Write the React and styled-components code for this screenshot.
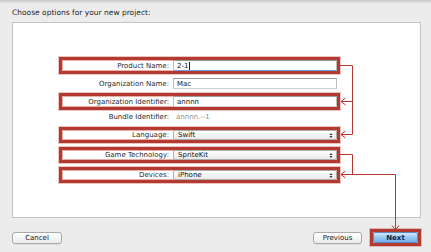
import React from 'react';
import styled, { createGlobalStyle } from 'styled-components';

const Global = createGlobalStyle`
  html, body { margin: 0; padding: 0; background: #ececec; }
  body { font-family: "DejaVu Sans", "Liberation Sans", sans-serif; }
`;

const RED = '#b23a30';

const Window = styled.div`
  position: relative;
  width: 431px;
  height: 252px;
  background: #ececec;
  display: flex;
  flex-direction: column;
  overflow: hidden;
`;

const TopEdge = styled.div`
  height: 3px;
  background: linear-gradient(#c6c6c6, #e3e3e3);
`;

const Title = styled.div`
  height: 19px;
  display: flex;
  align-items: center;
  padding-left: 12px;
  font-size: 7.5px;
  color: #1e1e1e;
`;

const Panel = styled.div`
  box-sizing: border-box;
  margin-left: 12px;
  width: 409px;
  height: 196px;
  background: #fff;
  border: 1px solid #c4c4c4;
  padding: 34px 0 0 46px;
  display: flex;
  flex-direction: column;
`;

const Row = styled.div`
  box-sizing: border-box;
  width: 281px;
  height: ${p => p.$h}px;
  margin-top: ${p => p.$mt || 0}px;
  border: 3px solid ${p => (p.$hl ? RED : 'transparent')};
  box-shadow: ${p => (p.$hl ? 'inset 0 0 0 1px #eab0a8, 0 0 0 1px rgba(200, 90, 80, 0.35)' : 'none')};
  display: grid;
  grid-template-columns: 108px 164px;
  column-gap: 3px;
  align-items: center;
`;

const Label = styled.div`
  text-align: right;
  font-size: 7px;
  color: #2a2a2a;
  white-space: nowrap;
  padding-right: 1px;
`;

const TextField = styled.div`
  box-sizing: border-box;
  height: 11px;
  border: 1px solid #bdbdbd;
  border-top-color: #9c9c9c;
  border-bottom-color: ${p => (p.$focus ? '#6f9fe2' : '#cfcfcf')};
  background: #fff;
  font-size: 7px;
  color: #111;
  padding-left: 3px;
  display: flex;
  align-items: center;
`;

const Caret = styled.span`
  display: inline-block;
  width: 1px;
  height: 8px;
  margin-left: 1px;
  background: #222;
`;

const Value = styled.div`
  font-size: 7px;
  color: #8e8e8e;
  padding-left: 3px;
  white-space: nowrap;
`;

const Popup = styled.div`
  box-sizing: border-box;
  height: 10px;
  border: 1px solid #aeaeae;
  border-radius: 2px;
  background: linear-gradient(#ffffff, #e9e9e9);
  font-size: 7px;
  color: #111;
  padding: 0 3px 0 4px;
  display: flex;
  align-items: center;
  justify-content: space-between;
`;

const Footer = styled.div`
  flex: 1;
  display: flex;
  align-items: center;
  gap: 8px;
  padding: 5px 10px 0 12px;
`;

const Button = styled.div`
  box-sizing: border-box;
  width: ${p => p.$w}px;
  height: 12px;
  margin-left: ${p => (p.$push ? 'auto' : '0')};
  border: 1px solid #a9a9a9;
  border-radius: 3px;
  background: linear-gradient(#ffffff, #ebebeb);
  box-shadow: 0 1px 0 rgba(0, 0, 0, 0.06);
  font-size: 7px;
  color: #151515;
  display: flex;
  align-items: center;
  justify-content: center;
`;

const NextWrap = styled.div`
  box-sizing: border-box;
  width: 51px;
  height: 17px;
  border: 3px solid ${RED};
  box-shadow: inset 0 0 0 1px #eab0a8, 0 0 0 1px rgba(200, 90, 80, 0.35);
  display: flex;
`;

const NextButton = styled.div`
  flex: 1;
  box-sizing: border-box;
  border: 1px solid #5d8bc8;
  border-radius: 2px;
  background: linear-gradient(#d3e8fd, #97c8f4 50%, #74b2ee);
  font-size: 7px;
  font-weight: bold;
  color: #10243f;
  display: flex;
  align-items: center;
  justify-content: center;
`;

const Overlay = styled.svg`
  position: absolute;
  left: 0;
  top: 0;
  pointer-events: none;
`;

const Stepper = () => (
  <svg width="4" height="7" viewBox="0 0 4 7">
    <path d="M0.5 3 L2 1 L3.5 3 Z" fill="#333" />
    <path d="M0.5 4 L2 6 L3.5 4 Z" fill="#333" />
  </svg>
);

const rows = [
  { label: 'Product Name:', kind: 'text', value: '2-1', hl: true, focus: true, h: 17 },
  { label: 'Organization Name:', kind: 'text', value: 'Mac', h: 17, mt: 1 },
  { label: 'Organization Identifier:', kind: 'text', value: 'annnn', hl: true, h: 17, mt: 1 },
  { label: 'Bundle Identifier:', kind: 'value', value: 'annnn.--1', h: 12 },
  { label: 'Language:', kind: 'popup', value: 'Swift', hl: true, h: 16, mt: 5 },
  { label: 'Game Technology:', kind: 'popup', value: 'SpriteKit', hl: true, h: 16, mt: 4 },
  { label: 'Devices:', kind: 'popup', value: 'iPhone', hl: true, h: 16, mt: 4 },
];

const Arrow = ({ d, head }) => (
  <g>
    <path d={d} fill="none" stroke={RED} strokeWidth="1" />
    <path d={head} fill="none" stroke={RED} strokeWidth="1" />
  </g>
);

export default function App() {
  return (
    <>
      <Global />
      <Window>
        <TopEdge />
        <Title>Choose options for your new project:</Title>
        <Panel>
          {rows.map(r => (
            <Row key={r.label} $hl={r.hl} $h={r.h} $mt={r.mt}>
              <Label>{r.label}</Label>
              {r.kind === 'text' && (
                <TextField $focus={r.focus}>
                  {r.value}
                  {r.focus && <Caret />}
                </TextField>
              )}
              {r.kind === 'value' && <Value>{r.value}</Value>}
              {r.kind === 'popup' && (
                <Popup>
                  <span>{r.value}</span>
                  <Stepper />
                </Popup>
              )}
            </Row>
          ))}
        </Panel>
        <Footer>
          <Button $w={50}>Cancel</Button>
          <Button $w={49} $push>Previous</Button>
          <NextWrap>
            <NextButton>Next</NextButton>
          </NextWrap>
        </Footer>
        <Overlay width="431" height="252" viewBox="0 0 431 252">
          <path d="M340 65.5 H352.5 V134.5" fill="none" stroke={RED} strokeWidth="1" />
          <Arrow d="M352.5 101.5 H341" head="M345.5 98 L341 101.5 L345.5 105" />
          <Arrow d="M352.5 134.5 H341" head="M345.5 131 L341 134.5 L345.5 138" />
          <path d="M340 154.5 H352.5 V174.5" fill="none" stroke={RED} strokeWidth="1" />
          <Arrow d="M395.5 174.5 H341" head="M345.5 171 L341 174.5 L345.5 178" />
          <Arrow d="M395.5 174.5 V230" head="M392 225.5 L395.5 230 L399 225.5" />
        </Overlay>
      </Window>
    </>
  );
}
